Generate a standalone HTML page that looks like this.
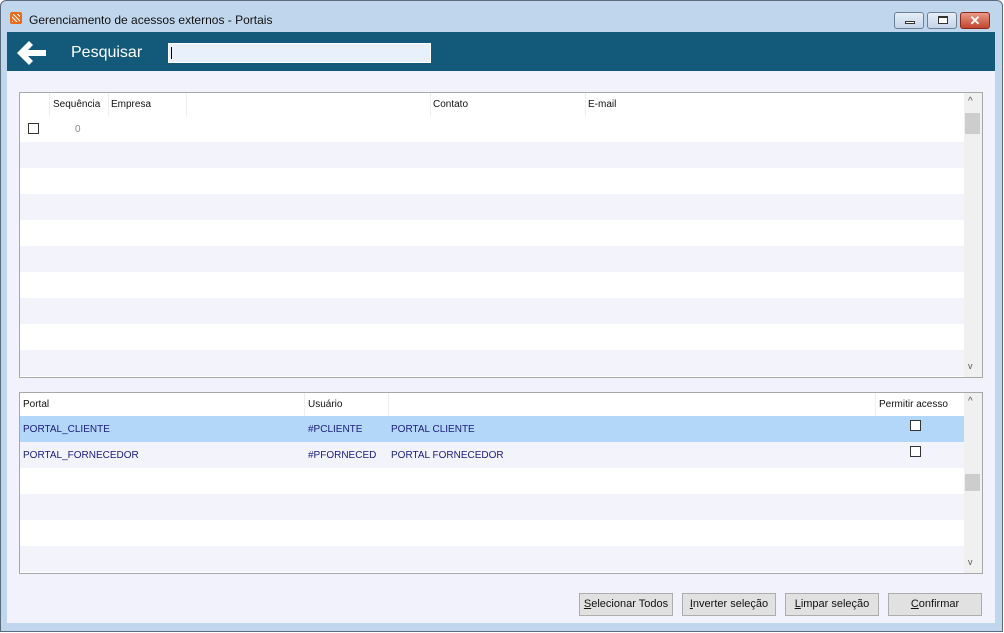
<!DOCTYPE html>
<html><head><meta charset="utf-8"><style>
*{margin:0;padding:0;box-sizing:border-box}
body{width:1004px;height:633px;overflow:hidden;background:#fff;font-family:"Liberation Sans",sans-serif;font-size:10px;position:relative}
.abs{position:absolute}
.frame{left:0;top:0;width:1003px;height:632px;background:#c0d6ec;border:1px solid #5a6b7c;border-radius:6px 6px 0 0}
.content{left:7px;top:32px;width:988px;height:591px;background:#f1f2fb}
.hdr{left:7px;top:32px;width:988px;height:39px;background:#135a7a}
.grid{background:#fff;border:1px solid #a8a8a8;overflow:hidden}
.row{position:absolute;left:0;height:26px;width:944px}
.alt{background:#f2f3fb}
.sb{position:absolute;top:0;width:18px;background:#f0f0f0}
.th{position:absolute;top:6px;color:#111}
.sep{position:absolute;top:0;width:1px;height:23px;background:#eee}
.cb{position:absolute;width:11px;height:11px;border:1px solid #333;background:#fff}
.t{position:absolute;color:#1c1c7c}
.btn{position:absolute;top:593px;height:23px;background:#e1e1e1;border:1px solid #adadad;text-align:center;line-height:21px;font-size:11px;color:#111}
.ctl{position:absolute;top:12px;height:17px;border:1px solid #6d7f94;border-radius:3px;background:linear-gradient(#e6eef8,#c5d5e8)}
</style></head><body>
<div class="abs frame"></div>
<div class="abs" style="left:10px;top:12px;width:12px;height:12px;background:#e86a1a;border-radius:2px"></div>
<div class="abs" style="left:12px;top:14px;width:8px;height:8px;background:repeating-linear-gradient(45deg,#fff 0 1px,transparent 1px 3px)"></div>
<div class="abs" style="left:29px;top:13px;font-size:12px;color:#111">Gerenciamento de acessos externos - Portais</div>
<div class="ctl" style="left:894px;width:30px"><div class="abs" style="left:10px;top:8px;width:10px;height:3px;background:#fff;border:1px solid #333"></div></div>
<div class="ctl" style="left:927px;width:30px"><div class="abs" style="left:10px;top:3px;width:10px;height:8px;border:1px solid #333;border-top-width:2px;background:#fff"></div></div>
<div class="ctl" style="left:960px;width:30px;background:linear-gradient(#e89a86,#c2452f);border-color:#8a2a1a;color:#fff;text-align:center;font-weight:bold;font-size:13px;line-height:15px">✕</div>
<div class="abs content"></div>
<div class="abs hdr"></div>
<svg class="abs" style="left:16px;top:40px" width="32" height="26" viewBox="0 0 32 26"><path d="M13 1 L1 13 L13 25 L17 21 L12 16 H30 V10 H12 L17 5 Z" fill="#fff"/></svg>
<div class="abs" style="left:71px;top:44px;font-size:16px;color:#fff">Pesquisar</div>
<div class="abs" style="left:168px;top:43px;width:263px;height:20px;background:#e8f1fb;border:1px solid #fff"><div class="abs" style="left:2px;top:3px;width:1px;height:12px;background:#000"></div></div>

<div class="abs grid" style="left:19px;top:92px;width:964px;height:286px">
 <div class="sep" style="left:29px"></div><div class="sep" style="left:88px"></div><div class="sep" style="left:166px"></div><div class="sep" style="left:410px"></div><div class="sep" style="left:565px"></div>
 <div class="th" style="left:33px">Sequência</div><div class="th" style="left:91px">Empresa</div><div class="th" style="left:413px">Contato</div><div class="th" style="left:568px">E-mail</div>
 <div class="cb" style="left:8px;top:30px"></div><div class="abs" style="left:55px;top:31px;color:#888">0</div>
 <div class="row alt" style="top:49px"></div><div class="row alt" style="top:101px"></div><div class="row alt" style="top:153px"></div><div class="row alt" style="top:205px"></div><div class="row alt" style="top:257px"></div>
 <div class="sb" style="left:944px;height:284px"><div class="abs" style="left:4px;top:3px;color:#555;font-size:10px">^</div><div class="abs" style="left:1px;top:20px;width:15px;height:21px;background:#cdcdcd"></div><div class="abs" style="left:4px;top:268px;color:#555;font-size:9px">v</div></div>
</div>

<div class="abs grid" style="left:19px;top:392px;width:964px;height:182px">
 <div class="sep" style="left:284px"></div><div class="sep" style="left:368px"></div><div class="sep" style="left:855px"></div>
 <div class="th" style="left:3px">Portal</div><div class="th" style="left:288px">Usuário</div><div class="th" style="left:859px">Permitir acesso</div>
 <div class="row" style="top:23px;background:#b3d7f8"></div>
 <div class="row alt" style="top:49px"></div><div class="row alt" style="top:101px"></div><div class="row alt" style="top:153px"></div>
 <div class="t" style="left:3px;top:31px">PORTAL_CLIENTE</div><div class="t" style="left:288px;top:31px">#PCLIENTE</div><div class="t" style="left:371px;top:31px">PORTAL CLIENTE</div>
 <div class="t" style="left:3px;top:57px">PORTAL_FORNECEDOR</div><div class="t" style="left:288px;top:57px">#PFORNECED</div><div class="t" style="left:371px;top:57px">PORTAL FORNECEDOR</div>
 <div class="cb" style="left:890px;top:27px"></div><div class="cb" style="left:890px;top:53px"></div>
 <div class="sb" style="left:944px;height:180px"><div class="abs" style="left:4px;top:3px;color:#555;font-size:10px">^</div><div class="abs" style="left:1px;top:81px;width:15px;height:17px;background:#cdcdcd"></div><div class="abs" style="left:4px;top:164px;color:#555;font-size:9px">v</div></div>
</div>

<div class="btn" style="left:579px;width:94px"><u>S</u>elecionar Todos</div>
<div class="btn" style="left:682px;width:94px"><u>I</u>nverter seleção</div>
<div class="btn" style="left:785px;width:94px"><u>L</u>impar seleção</div>
<div class="btn" style="left:888px;width:94px"><u>C</u>onfirmar</div>
</body></html>
